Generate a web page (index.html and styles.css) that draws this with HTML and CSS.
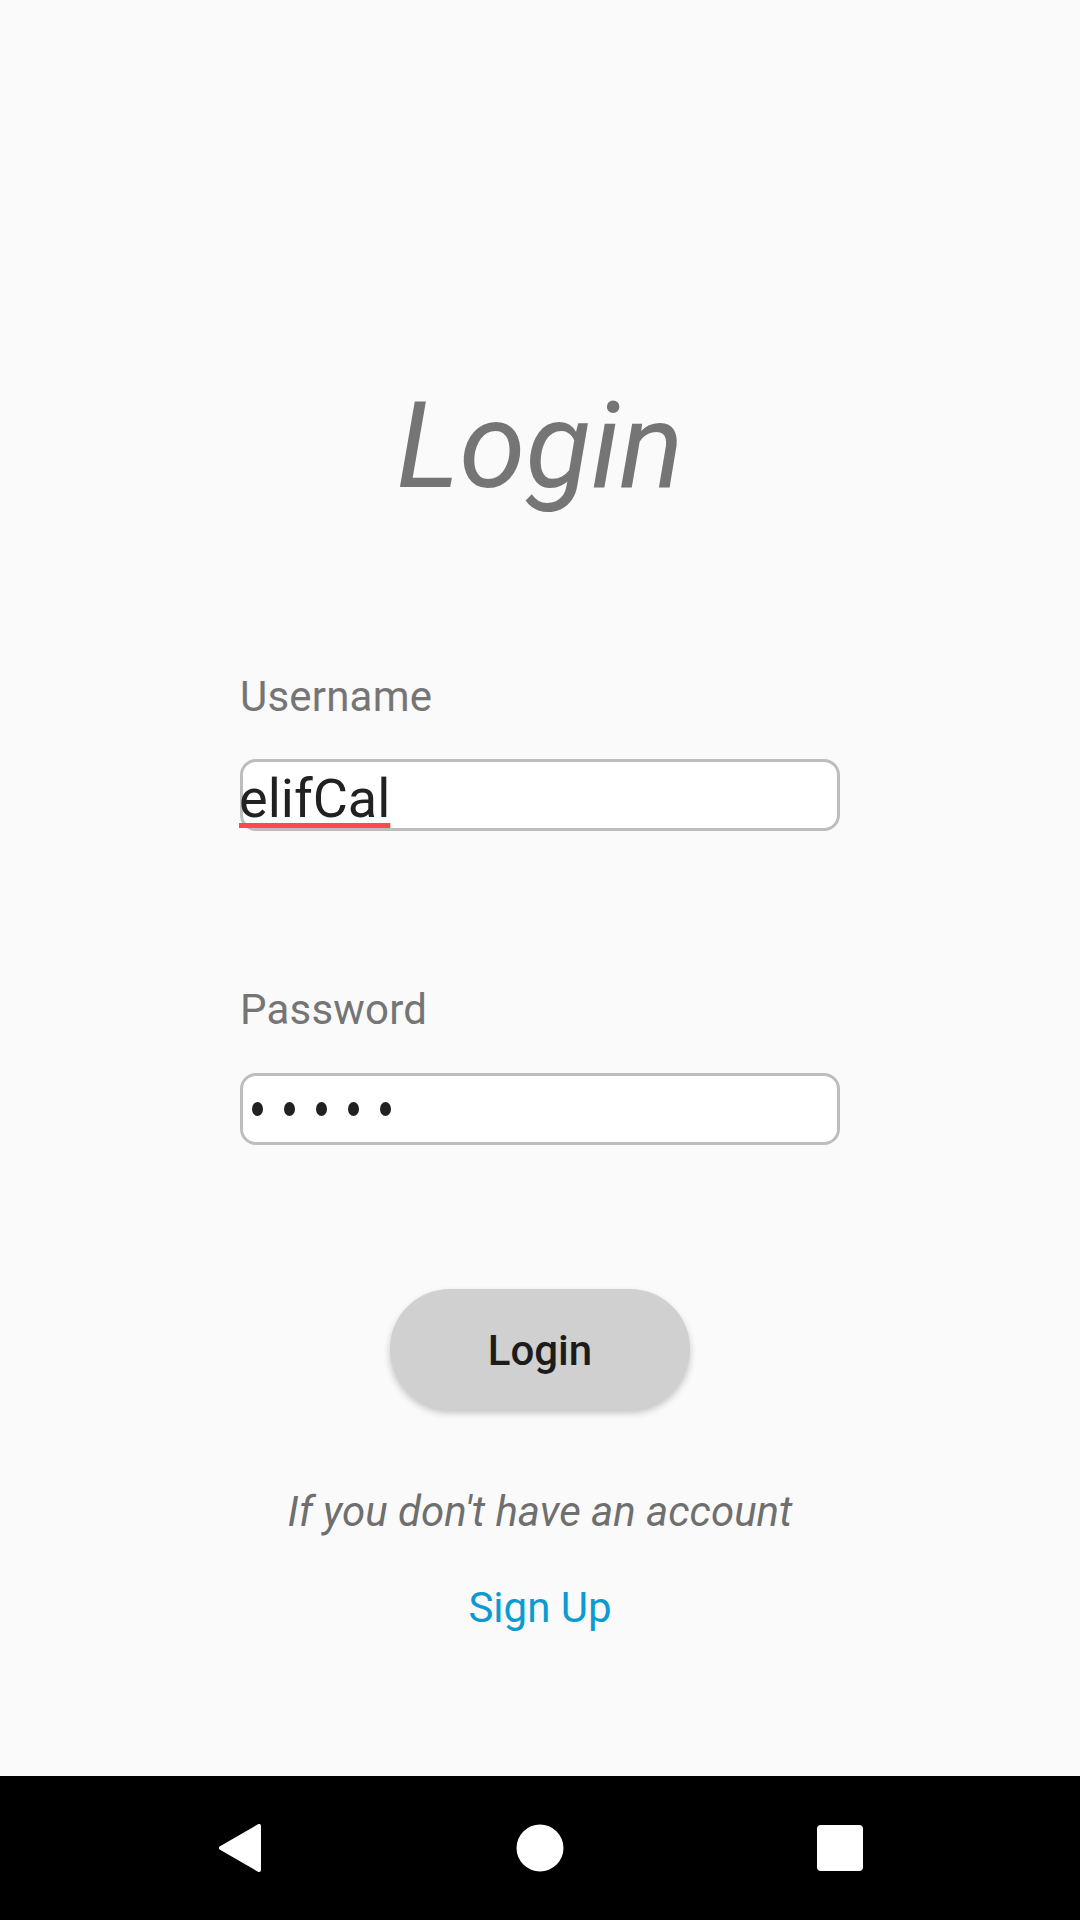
FILE: index.html
```html
<!DOCTYPE html>
<html>
<head>
<meta charset="utf-8">
<title>Login</title>
<link rel="stylesheet" href="styles.css">
</head>
<body>
<div class="screen">
  <main class="content">
    <h1 class="title">Login</h1>
    <section class="form">
      <label class="label label-user">Username</label>
      <div class="field">
        <span class="field-text">elifCal</span>
      </div>
      <label class="label label-pass">Password</label>
      <div class="field field-pass">
        <span class="dot"></span><span class="dot"></span><span class="dot"></span><span class="dot"></span><span class="dot"></span>
      </div>
    </section>
    <button class="login-btn"><span>Login</span></button>
    <p class="hint">If you don't have an account</p>
    <a class="signup">Sign Up</a>
  </main>
  <nav class="navbar">
    <div class="nav-item">
      <svg width="48" height="48" viewBox="0 0 48 48"><path d="M43 2 L43 46 L5 24 Z" fill="#fff" stroke="#fff" stroke-width="4" stroke-linejoin="round"/></svg>
    </div>
    <div class="nav-item">
      <svg width="48" height="48" viewBox="0 0 48 48"><circle cx="24" cy="24" r="23.5" fill="#fff"/></svg>
    </div>
    <div class="nav-item">
      <svg width="48" height="48" viewBox="0 0 48 48"><rect x="1" y="1" width="46" height="46" rx="4" fill="#fff"/></svg>
    </div>
  </nav>
</div>
</body>
</html>
```

FILE: styles.css
```css
* { box-sizing: border-box; }
html, body {
  margin: 0;
  padding: 0;
  background: #fafafa;
}
body {
  font-family: Roboto, "Liberation Sans", sans-serif;
  width: 1080px;
  height: 1920px;
  overflow: hidden;
}
.screen {
  display: flex;
  flex-direction: column;
  height: 1920px;
}
.content {
  height: 1776px;
  display: flex;
  flex-direction: column;
  align-items: center;
}
.title {
  margin: 376px 0 0 0;
  font-size: 120px;
  line-height: normal;
  font-style: italic;
  font-weight: 400;
  color: #757575;
}
.form {
  width: 600px;
  display: flex;
  flex-direction: column;
  margin-top: 156px;
}
.label {
  font-size: 42px;
  line-height: normal;
  color: #757575;
  letter-spacing: 0.2px;
}
.label-pass { margin-top: 154px; }
.field {
  margin-top: 38px;
  height: 72px;
  background: #fff;
  border: 3px solid #bdbdbd;
  border-radius: 16px;
  padding-top: 6px;
}
.field-text {
  display: inline-block;
  margin-left: -4px;
  font-size: 54px;
  line-height: 62px;
  color: #212121;
  text-decoration: underline;
  text-decoration-color: #ff4a4a;
  text-decoration-thickness: 5px;
  text-underline-offset: 6px;
}
.field-pass {
  margin-top: 39px;
  padding: 0 0 0 9px;
  display: flex;
  align-items: center;
  gap: 21px;
}
.dot {
  width: 11px;
  height: 14px;
  border-radius: 50%;
  background: #212121;
}
.login-btn {
  margin-top: 144px;
  width: 300px;
  height: 120px;
  border: none;
  border-radius: 60px;
  background: #d0d0d0;
  box-shadow: 0 4px 7px rgba(0, 0, 0, 0.22);
  font-family: Roboto, "Liberation Sans", sans-serif;
  font-size: 42px;
  font-weight: 500;
  color: #1c1c1c;
  padding: 3px 0 0 0;
  display: flex;
  align-items: center;
  justify-content: center;
}
.hint {
  margin: 78px 0 0 0;
  font-size: 42px;
  line-height: normal;
  font-style: italic;
  color: #6f6f6f;
}
.signup {
  margin-top: 47px;
  font-size: 42px;
  line-height: normal;
  color: #0b9bd1;
}
.navbar {
  height: 144px;
  background: #000;
  display: grid;
  grid-template-columns: repeat(3, 300px);
  justify-content: center;
  align-items: center;
}
.nav-item {
  display: flex;
  justify-content: center;
  align-items: center;
}
.nav-item svg { display: block; }
```
